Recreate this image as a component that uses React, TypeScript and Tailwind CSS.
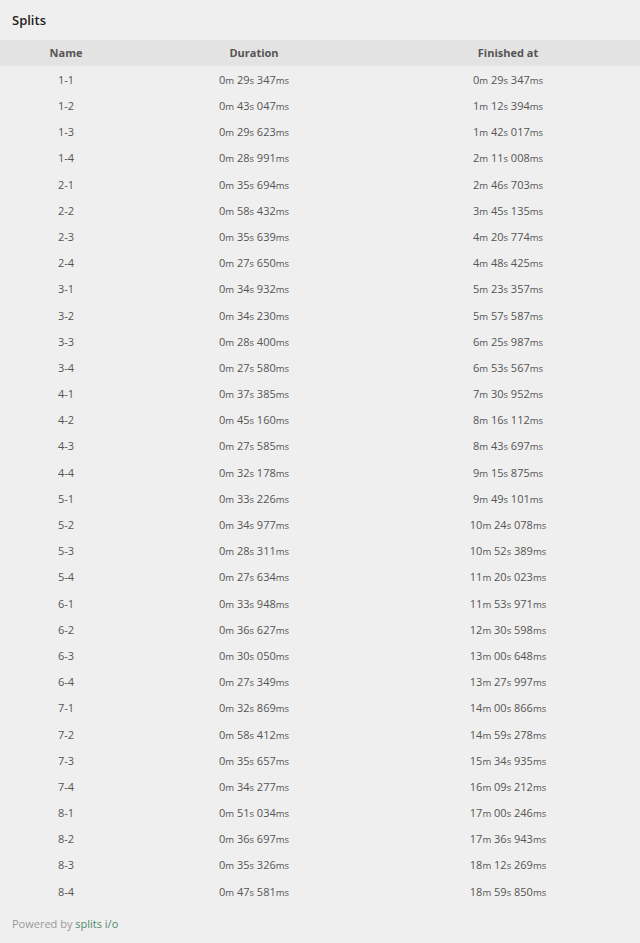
const splits: [string, string, string][] = [
  ["1-1", "0m 29s 347ms", "0m 29s 347ms"],
  ["1-2", "0m 43s 047ms", "1m 12s 394ms"],
  ["1-3", "0m 29s 623ms", "1m 42s 017ms"],
  ["1-4", "0m 28s 991ms", "2m 11s 008ms"],
  ["2-1", "0m 35s 694ms", "2m 46s 703ms"],
  ["2-2", "0m 58s 432ms", "3m 45s 135ms"],
  ["2-3", "0m 35s 639ms", "4m 20s 774ms"],
  ["2-4", "0m 27s 650ms", "4m 48s 425ms"],
  ["3-1", "0m 34s 932ms", "5m 23s 357ms"],
  ["3-2", "0m 34s 230ms", "5m 57s 587ms"],
  ["3-3", "0m 28s 400ms", "6m 25s 987ms"],
  ["3-4", "0m 27s 580ms", "6m 53s 567ms"],
  ["4-1", "0m 37s 385ms", "7m 30s 952ms"],
  ["4-2", "0m 45s 160ms", "8m 16s 112ms"],
  ["4-3", "0m 27s 585ms", "8m 43s 697ms"],
  ["4-4", "0m 32s 178ms", "9m 15s 875ms"],
  ["5-1", "0m 33s 226ms", "9m 49s 101ms"],
  ["5-2", "0m 34s 977ms", "10m 24s 078ms"],
  ["5-3", "0m 28s 311ms", "10m 52s 389ms"],
  ["5-4", "0m 27s 634ms", "11m 20s 023ms"],
  ["6-1", "0m 33s 948ms", "11m 53s 971ms"],
  ["6-2", "0m 36s 627ms", "12m 30s 598ms"],
  ["6-3", "0m 30s 050ms", "13m 00s 648ms"],
  ["6-4", "0m 27s 349ms", "13m 27s 997ms"],
  ["7-1", "0m 32s 869ms", "14m 00s 866ms"],
  ["7-2", "0m 58s 412ms", "14m 59s 278ms"],
  ["7-3", "0m 35s 657ms", "15m 34s 935ms"],
  ["7-4", "0m 34s 277ms", "16m 09s 212ms"],
  ["8-1", "0m 51s 034ms", "17m 00s 246ms"],
  ["8-2", "0m 36s 697ms", "17m 36s 943ms"],
  ["8-3", "0m 35s 326ms", "18m 12s 269ms"],
  ["8-4", "0m 47s 581ms", "18m 59s 850ms"],
];

// "0m 29s 347ms" -> digits normal size, units a bit smaller
function Time({ value }: { value: string }) {
  const parts = value.match(/\d+|[a-z]+|\s+/g) ?? [];
  return (
    <span>
      {parts.map((p, i) =>
        /[a-z]/.test(p) ? (
          <span key={i} className="text-[9.5px]">
            {p}
          </span>
        ) : (
          <span key={i}>{p}</span>
        )
      )}
    </span>
  );
}

export default function App() {
  return (
    <div
      className="min-h-[943px] w-[640px] bg-[#efefef] text-[#555]"
      style={{ fontFamily: '"Open Sans", "Noto Sans", sans-serif' }}
    >
      {/* Title */}
      <div className="flex h-10 items-center px-3 pt-0.5 text-[13px] font-semibold text-[#222]">
        Splits
      </div>

      {/* Header */}
      <div className="grid h-[26px] grid-cols-[132px_244px_1fr] items-center bg-[#e3e3e3] text-[11px] font-bold text-[#555]">
        <div className="text-center">Name</div>
        <div className="text-center">Duration</div>
        <div className="text-center">Finished at</div>
      </div>

      {/* Rows */}
      <div className="flex flex-col">
        {splits.map(([name, duration, finished]) => (
          <div
            key={name}
            className="grid h-[26.2px] grid-cols-[132px_244px_1fr] items-center pt-0.5 text-[11px]"
          >
            <div className="text-center">{name}</div>
            <div className="text-center">
              <Time value={duration} />
            </div>
            <div className="text-center">
              <Time value={finished} />
            </div>
          </div>
        ))}
      </div>

      {/* Footer */}
      <div className="flex h-10 items-center px-3 text-[11px] text-[#999]">
        Powered by&nbsp;<a className="text-[#4f8a6c]">splits i/o</a>
      </div>
    </div>
  );
}
